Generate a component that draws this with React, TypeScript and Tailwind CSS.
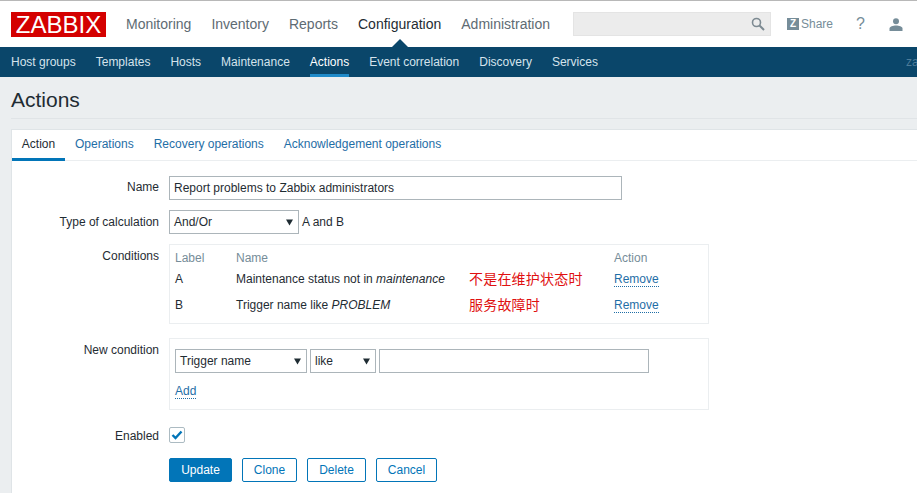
import React from "react";

const font = { fontFamily: '"Liberation Sans", Arial, "Noto Sans CJK SC", sans-serif' };

function Arrow() {
  return (
    <svg width="7" height="7" viewBox="0 0 7 7" className="shrink-0">
      <path d="M0 0.5 H7 L3.5 6.5 Z" fill="#1f2c33" />
    </svg>
  );
}

function Select({ label, className }: { label: string; className: string }) {
  return (
    <div className={`h-6 border border-[#acb5ba] flex items-center justify-between pl-1 pr-[5px] text-[12px] text-[#1f2c33] ${className}`}>
      <span>{label}</span>
      <Arrow />
    </div>
  );
}

function Row({ label, labelClass, className, children }: { label: string; labelClass?: string; className?: string; children: React.ReactNode }) {
  return (
    <div className={`flex items-start ${className ?? ""}`}>
      <div className={`w-[147px] shrink-0 text-right text-[12px] leading-[14px] text-[#1f2c33] ${labelClass ?? ""}`}>{label}</div>
      <div className="ml-[10px]">{children}</div>
    </div>
  );
}

function Link({ children }: { children: React.ReactNode }) {
  return <span className="text-[12px] leading-[14px] text-[#1f6ea6] border-b border-dotted border-[#1f6ea6]">{children}</span>;
}

function Btn({ children, className }: { children: React.ReactNode; className: string }) {
  return (
    <button className={`h-6 rounded-[2px] border border-[#0275b8] text-[12px] ${className}`}>{children}</button>
  );
}

export default function App() {
  return (
    <div style={font} className="w-[917px] h-[493px] overflow-hidden bg-[#ebeef0] flex flex-col">
      <header className="h-[47px] shrink-0 bg-white border-t border-t-[#b8b8b8] flex items-start pl-[11px] relative">
        <div className="mt-[11px] w-[95px] h-[25px] bg-[#d40000] text-white text-[24px] leading-[25px] text-center">ZABBIX</div>
        <nav className="ml-[20px] mt-[14px] flex gap-[20px] text-[14px] leading-[18px] text-[#5e6b73]">
          <span>Monitoring</span>
          <span>Inventory</span>
          <span>Reports</span>
          <span className="text-[#1f2c33]">Configuration</span>
          <span>Administration</span>
        </nav>
        <div className="ml-[23px] mt-[11px] w-[198px] h-6 bg-[#ececec] border border-[#e4e4e4] flex items-center justify-end pr-[5px]">
          <svg width="14" height="14" viewBox="0 0 14 14" fill="none" stroke="#7d8a92" strokeWidth="1.6">
            <circle cx="5.5" cy="5.5" r="4" />
            <path d="M8.5 8.5 L13 13" strokeWidth="2" />
          </svg>
        </div>
        <div className="ml-[16px] mt-[17px] w-3 h-3 bg-[#768d99] text-white text-[10px] leading-3 font-bold text-center">Z</div>
        <div className="ml-[2px] mt-[16px] text-[12px] leading-[14px] text-[#768d99]">Share</div>
        <div className="ml-[23px] mt-[14px] text-[16px] leading-[18px] text-[#768d99]">?</div>
        <svg className="ml-[24px] mt-[17px]" width="14" height="13" viewBox="0 0 14 13" fill="#768d99">
          <circle cx="7" cy="3.2" r="3" />
          <path d="M0.5 13 V10.5 C0.5 8.5 4 7.5 7 7.5 C10 7.5 13.5 8.5 13.5 10.5 V13 Z" />
        </svg>
        <svg className="absolute left-[392px] top-[38px]" width="16" height="8" viewBox="0 0 16 8">
          <path d="M0 8 L8 0 L16 8 Z" fill="#0a466a" />
        </svg>
      </header>

      <nav className="h-[30px] shrink-0 bg-[#0a466a] flex pl-[11px] gap-[20px] text-[12px] leading-[31px] text-[#d5e3ec] overflow-hidden whitespace-nowrap">
        <span>Host groups</span>
        <span>Templates</span>
        <span>Hosts</span>
        <span>Maintenance</span>
        <span className="h-[30px] text-white border-b-[3px] border-[#1f8ac9]">Actions</span>
        <span>Event correlation</span>
        <span>Discovery</span>
        <span>Services</span>
        <span className="ml-[288px] text-[#4d7c99]">zabbix</span>
      </nav>

      <div className="h-[42px] shrink-0 ml-[11px] flex items-center border-b border-[#e0e4e7]">
        <h1 className="text-[21px] leading-[24px] text-[#1f2c33] pt-[5px]">Actions</h1>
      </div>

      <main className="ml-[11px] mt-[10px] flex-1 bg-white border-l border-t border-[#dfe4e7]">
        <div className="h-[31px] flex border-b border-[#ebeef0] text-[12px] leading-[29px] text-[#1f6ea6]">
          <span className="h-[31px] w-[53px] text-center text-[#1f2c33] border-b-[3px] border-[#0275b8]">Action</span>
          <span className="ml-[10px]">Operations</span>
          <span className="ml-[20px]">Recovery operations</span>
          <span className="ml-[20px]">Acknowledgement operations</span>
        </div>

        <div className="pt-[15px]">
          <Row label="Name" labelClass="pt-[4px]">
            <input
              readOnly
              value="Report problems to Zabbix administrators"
              style={font}
              className="block w-[453px] h-6 border border-[#acb5ba] px-1 text-[12px] text-[#1f2c33] outline-none"
            />
          </Row>

          <Row label="Type of calculation" labelClass="pt-[5px]" className="mt-[10px]">
            <div className="flex items-center">
              <Select label="And/Or" className="w-[130px]" />
              <span className="ml-[3px] text-[12px] text-[#1f2c33]">A and B</span>
            </div>
          </Row>

          <Row label="Conditions" labelClass="pt-[5px]" className="mt-[10px]">
            <div className="w-[540px] h-[80px] border border-[#ebeef0] pl-[5px] pt-[6px] text-[12px] leading-[14px] text-[#1f2c33]">
              <div className="h-[14px] grid grid-cols-[61px_378px_1fr] text-[#768d99]">
                <span>Label</span>
                <span>Name</span>
                <span>Action</span>
              </div>
              <div className="mt-[7px] h-[14px] grid grid-cols-[61px_233px_145px_1fr] items-center">
                <span>A</span>
                <span>
                  Maintenance status not in <i>maintenance</i>
                </span>
                <span className="text-[14px] tracking-[0.2px] text-[#e01010]">不是在维护状态时</span>
                <span><Link>Remove</Link></span>
              </div>
              <div className="mt-[12px] h-[14px] grid grid-cols-[61px_233px_145px_1fr] items-center">
                <span>B</span>
                <span>
                  Trigger name like <i>PROBLEM</i>
                </span>
                <span className="text-[14px] tracking-[0.2px] text-[#e01010]">服务故障时</span>
                <span><Link>Remove</Link></span>
              </div>
            </div>
          </Row>

          <Row label="New condition" labelClass="pt-[5px]" className="mt-[14px]">
            <div className="w-[540px] h-[72px] border border-[#ebeef0] pl-[5px] pt-[10px]">
              <div className="flex gap-[3px]">
                <Select label="Trigger name" className="w-[132px]" />
                <Select label="like" className="w-[66px]" />
                <div className="w-[270px] h-6 border border-[#acb5ba]" />
              </div>
              <div className="mt-[10px] leading-[14px]">
                <Link>Add</Link>
              </div>
            </div>
          </Row>

          <Row label="Enabled" labelClass="pt-[2px]" className="mt-[17px]">
            <div className="w-4 h-4 rounded-[2px] border border-[#acbbc2] flex items-center justify-center">
              <svg width="12" height="10" viewBox="0 0 12 10" fill="none" stroke="#0275b8" strokeWidth="2.4">
                <path d="M1.5 5 L4.5 8 L10.5 1.5" />
              </svg>
            </div>
          </Row>

          <div className="mt-[15px] ml-[157px] flex gap-[10px]">
            <Btn className="w-[63px] bg-[#0275b8] text-white">Update</Btn>
            <Btn className="w-[55px] bg-white text-[#0275b8]">Clone</Btn>
            <Btn className="w-[59px] bg-white text-[#0275b8]">Delete</Btn>
            <Btn className="w-[61px] bg-white text-[#0275b8]">Cancel</Btn>
          </div>
        </div>
      </main>
    </div>
  );
}
